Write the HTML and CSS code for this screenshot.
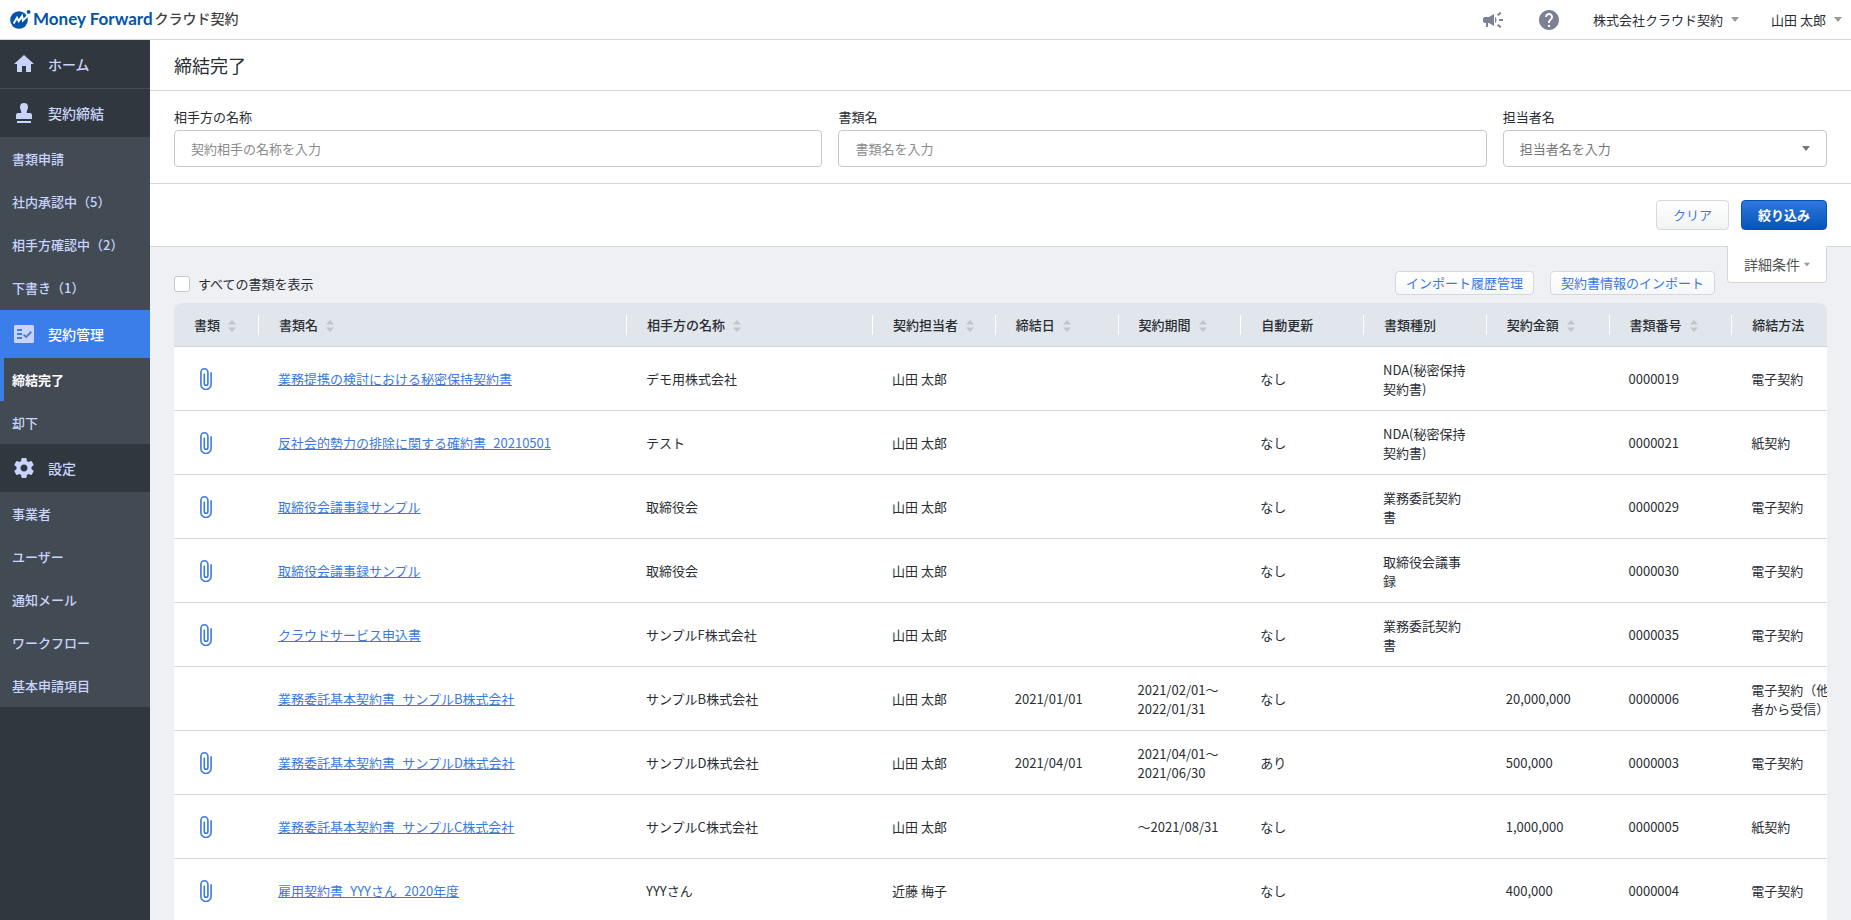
FILE: index.html
```html
<!DOCTYPE html>
<html lang="ja">
<head>
<meta charset="utf-8">
<title>締結完了 | クラウド契約</title>
<link rel="stylesheet" href="styles.css">
</head>
<body>
<svg class="sprite" aria-hidden="true">
  <symbol id="clip" viewBox="0 0 12 22"><path d="M11.100 4.200v12.200a5.100 5.100 0 0 1-10.200 0V4.300a3.500 3.500 0 0 1 7 0v11.200a1.800 1.800 0 0 1-3.600 0V5.500" fill="none" stroke="currentColor" stroke-width="1.600"/></symbol>
  <symbol id="sort" viewBox="0 0 8 12"><path d="M0 4.500 4 0l4 4.500zM0 7.500h8L4 12z" fill="currentColor"/></symbol>
  <symbol id="caret" viewBox="0 0 8 5"><path d="M0 0h8L4 5z" fill="currentColor"/></symbol>
</svg>
<div class="app">
  <header class="header">
    <a class="logo" href="#">
      <svg class="logo-mark" viewBox="0 0 22 20" aria-hidden="true"><circle cx="9" cy="11" r="8.800" fill="#0054ac"/><circle cx="18.600" cy="2.900" r="1.900" fill="#0054ac"/><path d="M3.600 14.600 7 8.800l1.700 3.300 3.400-5 .8 4.400 5.400-5.400" fill="none" stroke="#fff" stroke-width="2"/></svg>
      <span class="logo-name">Money Forward</span><span class="logo-product">クラウド契約</span>
    </a>
    <div class="header-tools">
      <button class="icon-button" aria-label="お知らせ"><svg width="24" height="24" viewBox="0 0 24 24" fill="#7b8093"><path d="M18 11v2h4v-2zM16 17.600l3.200 2.400 1.200-1.600-3.200-2.400zM20.400 5.600 19.200 4 16 6.400l1.200 1.600zM4 9c-1.100 0-2 .9-2 2v2c0 1.100.9 2 2 2h1v4h2v-4h1l5 3V6L8 9zM15.500 12c0-1.330-.58-2.530-1.500-3.350v6.690c.92-.81 1.500-2.010 1.500-3.340z"/></svg></button>
      <button class="icon-button" aria-label="ヘルプ"><svg width="24" height="24" viewBox="0 0 24 24" fill="#7b8093"><path d="M12 2C6.480 2 2 6.480 2 12s4.480 10 10 10 10-4.480 10-10S17.520 2 12 2zm1 17h-2v-2h2zm2.070-7.750-.9.920C13.450 12.900 13 13.500 13 15h-2v-.5c0-1.100.45-2.100 1.170-2.830l1.240-1.260c.37-.36.59-.86.59-1.410 0-1.100-.9-2-2-2s-2 .9-2 2H8c0-2.210 1.790-4 4-4s4 1.790 4 4c0 .88-.36 1.680-.93 2.250z"/></svg></button>
      <button class="menu-button menu-company">株式会社クラウド契約<svg class="caret"><use href="#caret"/></svg></button>
      <button class="menu-button">山田 太郎<svg class="caret"><use href="#caret"/></svg></button>
    </div>
  </header>

  <div class="body">
    <nav class="sidebar">
      <a class="nav-main" href="#"><svg viewBox="0 0 24 24"><path d="M10 20v-6h4v6h5v-8h3L12 3 2 12h3v8z"/></svg>ホーム</a>
      <a class="nav-main nav-divided" href="#"><svg viewBox="0 0 24 24"><path d="M12 2a4 4 0 0 1 4 4c0 2.400-1.300 3.200-1.300 6H18a2 2 0 0 1 2 2v4H4v-4a2 2 0 0 1 2-2h3.300C9.300 9.200 8 8.400 8 6a4 4 0 0 1 4-4zM5 20h14v2H5z"/></svg>契約締結</a>
      <a class="nav-sub" href="#">書類申請</a>
      <a class="nav-sub" href="#">社内承認中（5）</a>
      <a class="nav-sub" href="#">相手方確認中（2）</a>
      <a class="nav-sub" href="#">下書き（1）</a>
      <a class="nav-main nav-divided nav-current" href="#"><svg viewBox="0 0 24 24"><path fill-rule="evenodd" d="M3.500 3h17A1.500 1.500 0 0 1 22 4.500v15a1.500 1.500 0 0 1-1.500 1.500h-17A1.500 1.500 0 0 1 2 19.500v-15A1.500 1.500 0 0 1 3.500 3zM5 7v2h5V7zm0 4v2h5v-2zm0 4v2h5v-2zm7-3-1 1.200 3.200 3L20 10.500 18.600 9l-4.400 4.700z"/></svg>契約管理</a>
      <a class="nav-sub nav-active" href="#" aria-current="page">締結完了</a>
      <a class="nav-sub" href="#">却下</a>
      <a class="nav-main" href="#"><svg viewBox="0 0 24 24"><path d="M19.430 12.980c.04-.32.07-.64.07-.98s-.03-.66-.07-.98l2.110-1.650c.19-.15.24-.42.12-.64l-2-3.460c-.12-.22-.39-.3-.61-.22l-2.490 1c-.52-.4-1.080-.73-1.690-.98l-.38-2.650C14.460 2.180 14.250 2 14 2h-4c-.25 0-.46.18-.49.42l-.38 2.650c-.61.25-1.170.59-1.690.98l-2.490-1c-.23-.09-.49 0-.61.22l-2 3.460c-.13.22-.07.49.12.64l2.110 1.650c-.04.32-.07.65-.07.98s.03.66.07.98l-2.110 1.650c-.19.15-.24.42-.12.64l2 3.460c.12.22.39.3.61.22l2.490-1c.52.4 1.080.73 1.690.98l.38 2.650c.03.24.24.42.49.42h4c.25 0 .46-.18.49-.42l.38-2.650c.61-.25 1.170-.59 1.690-.98l2.490 1c.23.09.49 0 .61-.22l2-3.460c.12-.22.07-.49-.12-.64zM12 15.500c-1.930 0-3.500-1.570-3.500-3.500s1.570-3.500 3.500-3.500 3.500 1.570 3.500 3.500-1.570 3.500-3.500 3.500z"/></svg>設定</a>
      <a class="nav-sub" href="#">事業者</a>
      <a class="nav-sub" href="#">ユーザー</a>
      <a class="nav-sub" href="#">通知メール</a>
      <a class="nav-sub" href="#">ワークフロー</a>
      <a class="nav-sub" href="#">基本申請項目</a>
    </nav>

    <main class="main">
      <h1 class="page-title">締結完了</h1>
      <form class="search">
        <div class="fields">
          <div class="field"><label for="partner">相手方の名称</label><input id="partner" type="text" placeholder="契約相手の名称を入力"></div>
          <div class="field"><label for="docname">書類名</label><input id="docname" type="text" placeholder="書類名を入力"></div>
          <div class="field"><label for="owner">担当者名</label>
            <div class="select-box"><select id="owner"><option>担当者名を入力</option></select><svg class="caret"><use href="#caret"/></svg></div>
          </div>
        </div>
        <div class="actions">
          <button class="button" type="reset">クリア</button>
          <button class="button button-primary" type="button">絞り込み</button>
        </div>
      </form>

      <section class="content">
        <div class="toolbar">
          <label class="show-all"><input type="checkbox">すべての書類を表示</label>
          <div class="toolbar-buttons">
            <button class="button-small">インポート履歴管理</button>
            <button class="button-small">契約書情報のインポート</button>
          </div>
          <button class="detail-tab">詳細条件<svg class="caret"><use href="#caret"/></svg></button>
        </div>
        <div class="table-wrap">
          <table class="table">
            <colgroup><col class="col-file"><col class="col-name"><col class="col-partner"><col><col><col><col><col><col><col><col></colgroup>
            <thead>
              <tr>
                <th>書類<svg class="sort"><use href="#sort"/></svg></th>
                <th>書類名<svg class="sort"><use href="#sort"/></svg></th>
                <th>相手方の名称<svg class="sort"><use href="#sort"/></svg></th>
                <th>契約担当者<svg class="sort"><use href="#sort"/></svg></th>
                <th>締結日<svg class="sort"><use href="#sort"/></svg></th>
                <th>契約期間<svg class="sort"><use href="#sort"/></svg></th>
                <th>自動更新</th>
                <th>書類種別</th>
                <th>契約金額<svg class="sort"><use href="#sort"/></svg></th>
                <th>書類番号<svg class="sort"><use href="#sort"/></svg></th>
                <th>締結方法</th>
              </tr>
            </thead>
            <tbody>
              <tr><td><svg class="clip"><use href="#clip"/></svg></td><td><a href="#">業務提携の検討における秘密保持契約書</a></td><td>デモ用株式会社</td><td>山田 太郎</td><td></td><td></td><td>なし</td><td>NDA(秘密保持契約書)</td><td></td><td>0000019</td><td>電子契約</td></tr>
              <tr><td><svg class="clip"><use href="#clip"/></svg></td><td><a href="#">反社会的勢力の排除に関する確約書_20210501</a></td><td>テスト</td><td>山田 太郎</td><td></td><td></td><td>なし</td><td>NDA(秘密保持契約書)</td><td></td><td>0000021</td><td>紙契約</td></tr>
              <tr><td><svg class="clip"><use href="#clip"/></svg></td><td><a href="#">取締役会議事録サンプル</a></td><td>取締役会</td><td>山田 太郎</td><td></td><td></td><td>なし</td><td>業務委託契約書</td><td></td><td>0000029</td><td>電子契約</td></tr>
              <tr><td><svg class="clip"><use href="#clip"/></svg></td><td><a href="#">取締役会議事録サンプル</a></td><td>取締役会</td><td>山田 太郎</td><td></td><td></td><td>なし</td><td>取締役会議事録</td><td></td><td>0000030</td><td>電子契約</td></tr>
              <tr><td><svg class="clip"><use href="#clip"/></svg></td><td><a href="#">クラウドサービス申込書</a></td><td>サンプルF株式会社</td><td>山田 太郎</td><td></td><td></td><td>なし</td><td>業務委託契約書</td><td></td><td>0000035</td><td>電子契約</td></tr>
              <tr><td></td><td><a href="#">業務委託基本契約書_サンプルB株式会社</a></td><td>サンプルB株式会社</td><td>山田 太郎</td><td>2021/01/01</td><td>2021/02/01～<br>2022/01/31</td><td>なし</td><td></td><td>20,000,000</td><td>0000006</td><td>電子契約（他者から受信）</td></tr>
              <tr><td><svg class="clip"><use href="#clip"/></svg></td><td><a href="#">業務委託基本契約書_サンプルD株式会社</a></td><td>サンプルD株式会社</td><td>山田 太郎</td><td>2021/04/01</td><td>2021/04/01～<br>2021/06/30</td><td>あり</td><td></td><td>500,000</td><td>0000003</td><td>電子契約</td></tr>
              <tr><td><svg class="clip"><use href="#clip"/></svg></td><td><a href="#">業務委託基本契約書_サンプルC株式会社</a></td><td>サンプルC株式会社</td><td>山田 太郎</td><td></td><td>～2021/08/31</td><td>なし</td><td></td><td>1,000,000</td><td>0000005</td><td>紙契約</td></tr>
              <tr><td><svg class="clip"><use href="#clip"/></svg></td><td><a href="#">雇用契約書_YYYさん_2020年度</a></td><td>YYYさん</td><td>近藤 梅子</td><td></td><td></td><td>なし</td><td></td><td>400,000</td><td>0000004</td><td>電子契約</td></tr>
            </tbody>
          </table>
        </div>
      </section>
    </main>
  </div>
</div>
</body>
</html>
```
FILE: styles.css
```css
* { box-sizing: border-box; }

body {
  margin: 0;
  font-family: "Noto Sans CJK JP", sans-serif;
  font-size: 13px;
  line-height: 19px;
  color: #292e33;
  background: #eef0f4;
}

a { color: inherit; text-decoration: none; }
button, input, select { font: inherit; color: inherit; }
button { cursor: pointer; }
.sprite { display: none; }

.app { display: flex; flex-direction: column; height: 100vh; overflow: hidden; }

.caret { width: 8px; height: 5px; color: #97999c; flex: none; }

/* Header */
.header {
  display: flex;
  flex: none;
  align-items: center;
  justify-content: space-between;
  height: 40px;
  padding: 0 9px 0 10px;
  background: #fff;
  border-bottom: 1px solid #d3d7da;
}
.logo { display: flex; align-items: center; padding-bottom: 2px; }
.logo-mark { width: 22px; height: 20px; }
.logo-name { margin-left: 1px; font: bold 17px/20px Lato, sans-serif; color: #0054ac; }
.logo-product { margin-left: 2px; font-size: 14px; font-weight: 500; color: #444; }
.header-tools { display: flex; align-items: center; }
.icon-button, .menu-button { display: flex; align-items: center; padding: 0; border: 0; background: none; }
.icon-button { margin-right: 32px; }
.menu-button { gap: 8px; }
.menu-company { margin-right: 32px; }

/* Sidebar */
.body { display: flex; flex: 1; min-height: 0; }
.sidebar { flex: none; width: 150px; background: #31373e; color: #c8d4fb; font-weight: 500; }
.nav-main { display: flex; align-items: center; gap: 12px; height: 48px; padding: 0 12px; font-size: 14px; background: #31373e; }
.nav-main svg { width: 24px; height: 24px; fill: #c8d4fb; }
.nav-divided { height: 49px; border-top: 1px solid #454c55; }
.nav-current { background: #3b7de9; color: #fff; }
.nav-sub { display: flex; align-items: center; height: 43px; padding: 0 12px; background: #424a54; }
.nav-active { padding-left: 8px; border-left: 4px solid #3b7de9; color: #fff; font-weight: 700; }

/* Search panel */
.main { flex: 1; min-width: 0; overflow: hidden; }
.page-title { margin: 0; padding: 12px 24px 12px; font-size: 18px; font-weight: 400; line-height: 26px; background: #fff; border-bottom: 1px solid #d3d7da; }
.search { background: #fff; }
.fields { display: grid; grid-template-columns: 2fr 2fr 1fr; gap: 16px; padding: 16px 24px; border-bottom: 1px solid #d3d7da; }
.field { display: flex; flex-direction: column; gap: 4px; }
.field input, .field select { width: 100%; height: 37px; padding: 0 16px; border: 1px solid #c4c8cc; border-radius: 4px; background: #fff; outline: 0; }
.field select { appearance: none; color: #777; }
.field input::placeholder { color: #8b8b8b; opacity: 1; }
.select-box { position: relative; }
.select-box .caret { position: absolute; top: 16px; right: 17px; color: #777; }
.actions { display: flex; justify-content: flex-end; gap: 12px; padding: 16px 24px; border-bottom: 1px solid #d3d7da; }
.button { height: 30px; padding: 0 16px 2px; border: 1px solid #d5d8dc; border-radius: 4px; background: linear-gradient(#fff, #f2f3f4); color: #3b7ae0; }
.button-primary { border-color: #0b51ab; background: linear-gradient(#2f79e4, #0553b3) border-box; color: #fff; font-weight: 700; }

/* Toolbar */
.content { padding: 0 24px; }
.toolbar { display: flex; align-items: flex-start; gap: 12px; height: 56px; }
.show-all { display: flex; align-items: center; gap: 8px; margin-right: auto; padding-top: 27px; }
.show-all input { width: 16px; height: 16px; margin: 0; appearance: none; border: 1px solid #c4c8cc; border-radius: 3px; background: #fff; }
.toolbar-buttons { display: flex; gap: 16px; padding-top: 24px; }
.button-small { height: 24px; padding: 0 10px 1px; border: 1px solid #d5d8dc; border-radius: 4px; background: linear-gradient(#fff, #f6f7f8); color: #3b7ae0; line-height: 20px; }
.detail-tab { display: flex; align-items: center; gap: 4px; height: 37px; margin-top: -1px; padding: 0 16px; border: 1px solid #d3d7da; border-top: 0; border-radius: 0 0 4px 4px; background: #fff; font-size: 14px; color: #555; }
.detail-tab .caret { width: 6px; }

/* Contract table */
.table-wrap { overflow: hidden; border-radius: 8px 8px 0 0; }
.table { width: 100%; min-width: 1681px; table-layout: fixed; border-collapse: separate; border-spacing: 0; }
.col-file { width: 85px; }
.col-name { width: 368px; }
.col-partner { width: 246px; }
.table th { height: 44px; padding: 0 0 0 20px; text-align: left; font-weight: 500; white-space: nowrap; border-bottom: 1px solid #d0d5dc; background: linear-gradient(#fff, #fff) right center / 1px 20px no-repeat #e1e5ec; }
.table td { height: 64px; padding: 0 20px 0 19px; background: #fff; border-bottom: 1px solid #d3d7da; line-height: 19px; }
.table a { color: #3b7ae0; text-decoration: underline; }
.sort { width: 8px; height: 12px; margin-left: 8px; vertical-align: -2px; color: #c1c6ce; }
.clip { display: block; width: 12px; height: 22px; margin-left: 7px; color: #3b7ae0; }
```
